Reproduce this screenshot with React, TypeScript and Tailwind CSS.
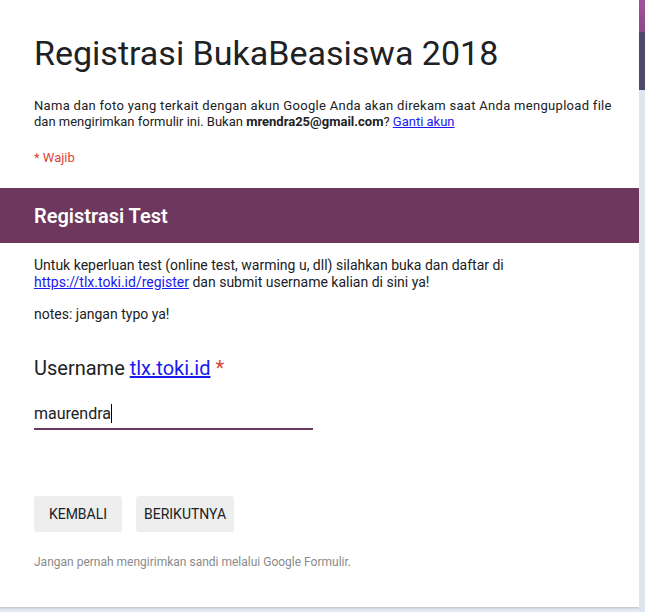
import React from "react";

export default function App() {
  return (
    <div className="w-[645px] h-[612px] bg-[#e3e9f0] flex overflow-hidden" style={{ fontFamily: "Roboto, 'Noto Sans', sans-serif" }}>
      <div className="w-[639px] h-[607px] bg-white shadow-[0_1px_2px_rgba(0,0,0,0.2)] flex flex-col">
        <div className="px-[34px] pt-[31px]">
          <h1 className="text-[34px] leading-[44px] text-[#202124] font-normal">Registrasi BukaBeasiswa 2018</h1>
          <p className="mt-[23px] text-[13px] leading-[16px] text-[#202124] whitespace-nowrap">
            <span className="tracking-[0.3px]">Nama dan foto yang terkait dengan akun Google Anda akan direkam saat Anda mengupload file</span><br />dan mengirimkan formulir ini. Bukan <b className="font-bold">mrendra25@gmail.com</b>? <a className="text-[#1a1aee] underline" href="#">Ganti akun</a>
          </p>
          <p className="mt-[20px] text-[13px] leading-[16px] text-[#db4437]">* Wajib</p>
        </div>
        <div className="mt-[22px] h-[55px] bg-[#6e375d] px-[34px] flex items-center">
          <h2 className="text-[20px] font-semibold text-white">Registrasi Test</h2>
        </div>
        <div className="px-[34px] pt-[14px]">
          <p className="text-[14px] leading-[17px] text-[#202124]">
            Untuk keperluan test (online test, warming u, dll) silahkan buka dan daftar di<br />
            <a className="text-[#1a1aee] underline" href="#">https://tlx.toki.id/register</a> dan submit username kalian di sini ya!
          </p>
          <p className="mt-[15px] text-[14px] leading-[17px] text-[#202124]">notes: jangan typo ya!</p>
          <div className="mt-[33px] text-[20px] leading-[24px] text-[#202124]">
            Username <a className="text-[#1a1aee] underline" href="#">tlx.toki.id</a> <span className="text-[#db4437]">*</span>
          </div>
          <div className="mt-[22px] w-[279px] border-b-2 border-[#6e375d] pb-[2px]">
            <span className="text-[16px] leading-[22px] text-[#202124]">maurendra</span>
            <span className="inline-block w-px h-[19px] bg-black align-[-4px]"></span>
          </div>
          <div className="mt-[66px] flex gap-[14px]">
            <button className="h-[36px] rounded-[3px] bg-[#eeeeee] text-[14px] font-normal text-[#202124] w-[88px]">KEMBALI</button>
            <button className="h-[36px] rounded-[3px] bg-[#eeeeee] text-[14px] font-normal text-[#202124] w-[98px]">BERIKUTNYA</button>
          </div>
          <p className="mt-[23px] text-[12px] leading-[14px] text-[#8a8a8a]">Jangan pernah mengirimkan sandi melalui Google Formulir.</p>
        </div>
      </div>
      <div className="w-[6px] h-full flex flex-col">
        <div className="h-[32px] bg-gradient-to-b from-[#a34f9b] to-[#8d4a8a]"></div>
        <div className="h-[58px] bg-[#4b4a6d]"></div>
        <div className="flex-1 bg-[#dde5ee]"></div>
      </div>
    </div>
  );
}
